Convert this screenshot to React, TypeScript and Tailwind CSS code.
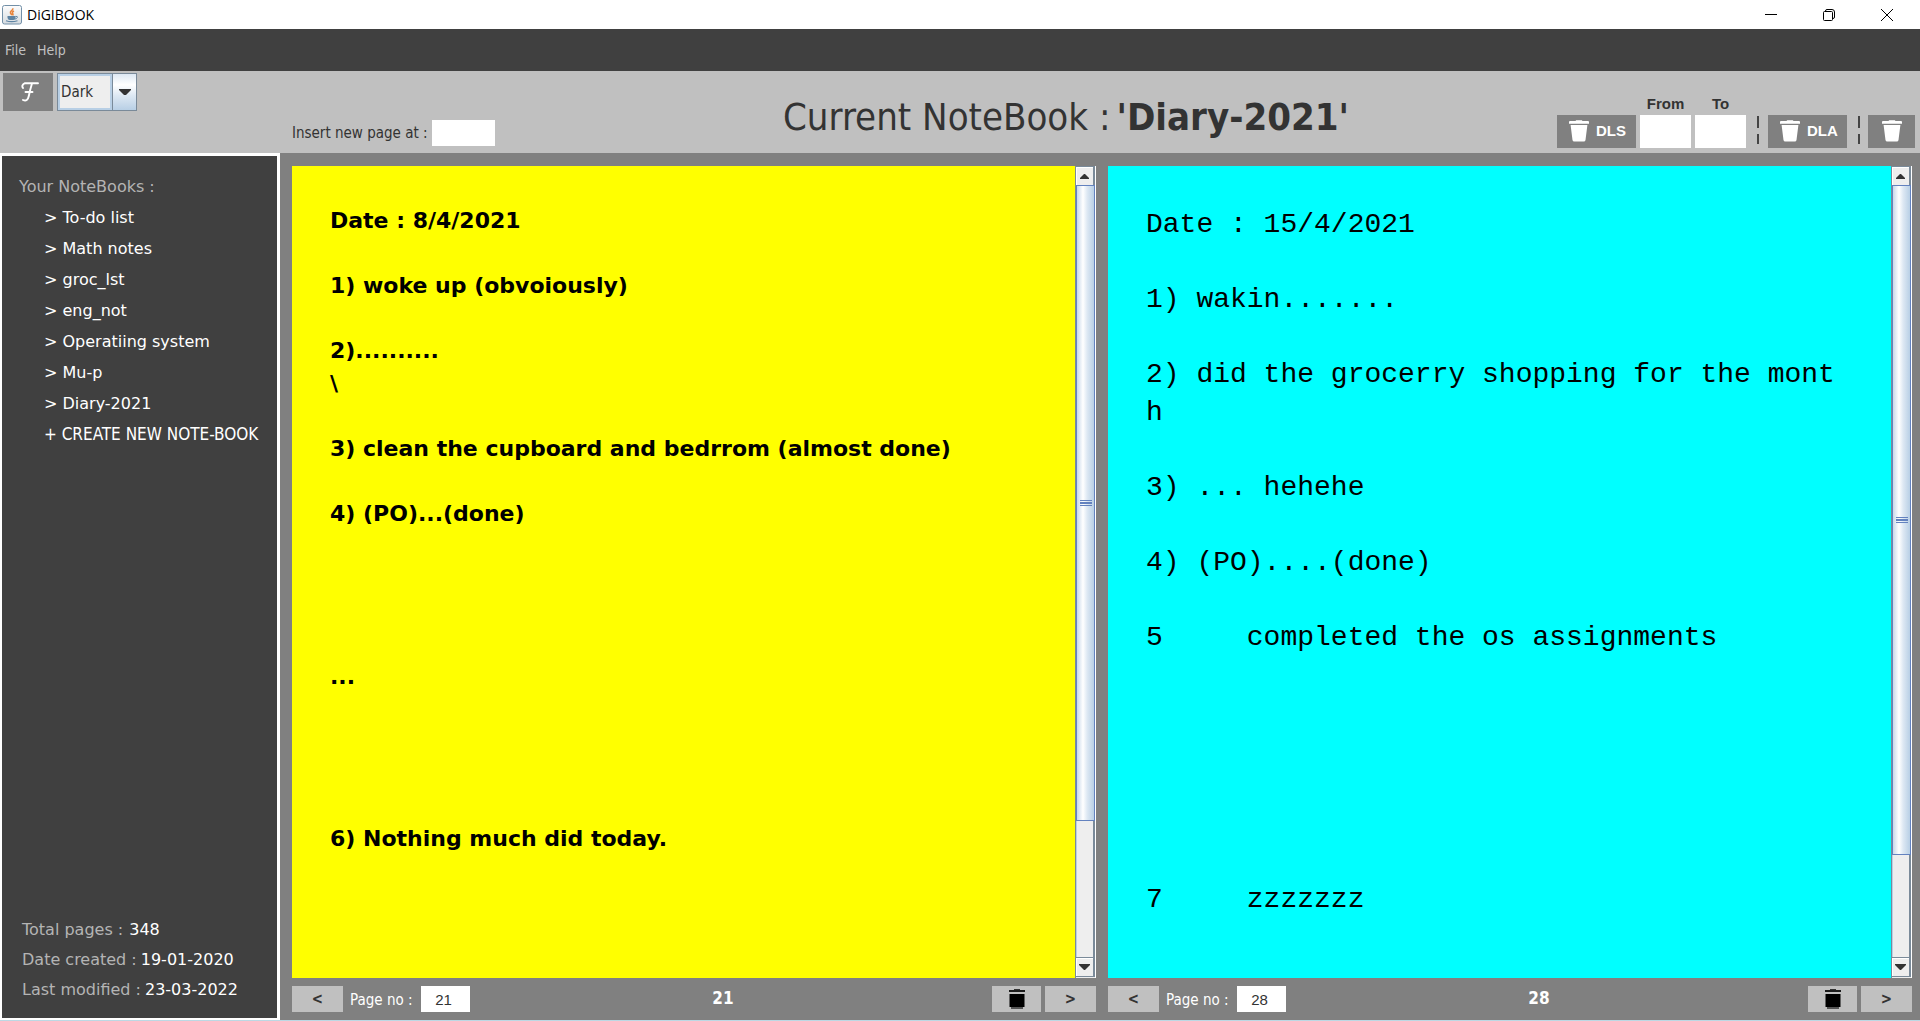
import { useState } from "react";

const notebooks = ["To-do list", "Math notes", "groc_lst", "eng_not", "Operatiing system", "Mu-p", "Diary-2021"];

const leftText = `Date : 8/4/2021

1) woke up (obvoiously)

2)..........
\\

3) clean the cupboard and bedrrom (almost done)

4) (PO)...(done)




...




6) Nothing much did today.`;

const rightText = `Date : 15/4/2021

1) wakin.......

2) did the grocerry shopping for the month

3) ... hehehe

4) (PO)....(done)

5     completed the os assignments






7     zzzzzzz`;

function Trash({ className }: { className: string }) {
  return (
    <svg viewBox="0 0 20 22" className={className} fill="currentColor" aria-hidden="true">
      <path d="M1 1h5.500L7.200.2h5.600l.7.8H19q1 0 1 1v1.700H0V2q0-1 1-1z" />
      <path d="M1.600 5h16.800l-1.900 15q-.2 1.600-1.800 1.600H5.300q-1.600 0-1.800-1.600z" />
    </svg>
  );
}

function SquareTrash() {
  return (
    <svg viewBox="0 0 16 20" className="h-5 w-4" aria-hidden="true">
      <path d="M5 0h6v1H5z" fill="#333" />
      <path d="M0 1h16v2H0z" fill="#1c1c1c" />
      <path d="M.5 5h15v13H.5z" fill="#000" />
      <path d="M2 18h12v2H2z" fill="#555" />
    </svg>
  );
}

function JavaIcon() {
  return (
    <svg viewBox="0 0 20 20" className="size-5" aria-hidden="true">
      <defs>
        <linearGradient id="jbg" x1="0" y1="0" x2="0" y2="1">
          <stop offset="0" stopColor="#fdfdfd" />
          <stop offset="1" stopColor="#d5dbe0" />
        </linearGradient>
      </defs>
      <rect x="0.5" y="0.5" width="19" height="18.5" rx="2" fill="url(#jbg)" stroke="#7390a8" />
      <path d="M10.800 3.200c.8 2-3 2.800-2.400 4.600.3 1 1.200 1.500 1.400 2.400M12 6c-1.800.8-2 1.700-1.200 2.800.5.700.2 1.200-.2 1.600" fill="none" stroke="#e8833a" strokeWidth="1.500" />
      <path d="M5.500 11h8v1.500q0 2-2 2.500h-4q-2-.5-2-2.500z" fill="#5f84a3" />
      <path d="M13.500 11.400q2.500-.3 1.800 1.200t-2.800 1.500" fill="none" stroke="#5f84a3" />
      <path d="M4 15.800q5.500 1.800 11.500 0" fill="none" stroke="#5f84a3" strokeWidth="1.200" />
    </svg>
  );
}

function Divider() {
  return (
    <div className="flex h-8 w-[2px] flex-col justify-between pb-1" aria-hidden="true">
      <span className="h-3 bg-[#444]" />
      <span className="h-[10px] bg-[#444]" />
    </div>
  );
}

function ScrollBar({ share }: { share: number }) {
  return (
    <div className="flex w-[21px] flex-col border-r border-l border-r-white border-l-[#7a8a99] bg-[#eeeeee]">
      <button type="button" aria-label="Scroll up" className="grid h-[19px] place-items-center border-t border-r-2 border-[#7a8a99] shadow-[inset_1px_1px_0_#fff]">
        <svg viewBox="0 0 9 5" className="h-[5px] w-[9px]" fill="#333"><path d="M4 0h1l4 4v1H0V4z" /></svg>
      </button>
      <div className="flex-1 border-r-2 border-[#7a8a99] shadow-[inset_1px_0_0_#b8cfe5]">
        <div
          className="-mr-[2px] flex flex-col items-center justify-center gap-px border border-[#6382bf] bg-[linear-gradient(90deg,#c8d8ea_0%,#ffffff_35%,#dde8f3_60%,#b8cfe5_100%)]"
          style={{ height: `${share}%` }}
        >
          <span className="h-px w-3 bg-[#6382bf]" />
          <span className="h-[2px] w-3 bg-[#6382bf]" />
          <span className="h-px w-3 bg-[#6382bf]" />
        </div>
      </div>
      <button type="button" aria-label="Scroll down" className="mb-px grid h-5 place-items-center border-t border-r-2 border-b border-[#7a8a99] shadow-[inset_1px_1px_0_#fff]">
        <svg viewBox="0 0 11 6" className="h-[6px] w-[11px]" fill="#333"><path d="M0 0h11v1L6 6H5L0 1z" /></svg>
      </button>
    </div>
  );
}

function Page({ text, page, share, style }: { text: string; page: number; share: number; style: string }) {
  const [value, setValue] = useState(text);
  const id = `page-no-${page}`;
  return (
    <section className="flex min-w-0 flex-col">
      <div className="flex min-h-0 flex-1">
        <textarea
          aria-label={`Page ${page}`}
          spellCheck={false}
          value={value}
          onChange={(e) => setValue(e.target.value)}
          className={`min-w-0 flex-1 resize-none overflow-hidden break-all whitespace-pre-wrap text-black outline-none ${style}`}
        />
        <ScrollBar share={share} />
      </div>
      <div className="flex h-[42px] items-start pt-2">
        <button type="button" className="h-[26px] w-[51px] bg-[#c0c0c0] pt-px text-[15px] font-bold text-[#333]">&lt;</button>
        <label htmlFor={id} className="w-[78px] pt-1 pl-[7px] text-[15px] leading-5 whitespace-pre text-white">Page no :</label>
        <input id={id} defaultValue={page} className="h-[26px] w-[49px] bg-white pr-1 text-center font-['Liberation_Sans'] text-[15px] text-[#333] outline-none" />
        <output className="flex-1 pr-4 text-center text-[17px] leading-6 font-bold text-white">{page}</output>
        <button type="button" aria-label="Delete page" className="mr-1 grid h-[26px] w-[49px] place-items-center bg-[#c0c0c0]"><SquareTrash /></button>
        <button type="button" className="h-[26px] w-[51px] bg-[#c0c0c0] pt-px text-[15px] font-bold text-[#333]">&gt;</button>
      </div>
    </section>
  );
}

export default function App() {
  return (
    <div className="flex h-screen flex-col overflow-hidden border-b border-[#bcd8e4] bg-[#808080] font-['DejaVu_Sans_Condensed','Noto_Sans',sans-serif] text-[#333]">
      <header className="flex h-[29px] items-center bg-white pl-[2px]">
        <JavaIcon />
        <h1 className="ml-[5px] flex-1 font-['Open_Sans'] text-[14px] text-black">DiGIBOOK</h1>
        <button type="button" aria-label="Minimize" className="grid h-full w-[58px] place-items-center">
          <svg viewBox="0 0 12 12" className="size-3" stroke="#000"><path d="M0 5.500h12" /></svg>
        </button>
        <button type="button" aria-label="Restore" className="grid h-full w-[58px] place-items-center">
          <svg viewBox="0 0 12 12" className="size-3" fill="none" stroke="#000"><rect x=".5" y="2.500" width="9" height="9" rx="1" /><path d="M2.500 2.500v-.5q0-1.500 1.500-1.500h5q2.500 0 2.500 2.500v5q0 1.500-1.500 1.500" /></svg>
        </button>
        <button type="button" aria-label="Close" className="mr-1 grid h-full w-[58px] place-items-center">
          <svg viewBox="0 0 12 12" className="size-3" stroke="#000"><path d="M0 0l12 12M12 0L0 12" /></svg>
        </button>
      </header>

      <nav className="flex h-[42px] items-center gap-[11px] bg-[#404040] pl-[5px] text-[14px] text-[#c0c0c0]">
        <button type="button">File</button>
        <button type="button">Help</button>
      </nav>

      <div className="flex h-[82px] bg-[#c0c0c0]">
        <div className="flex w-[292px] items-start gap-1 pt-[2px] pl-[3px]">
          <button type="button" aria-label="Font" className="grid h-[38px] w-[50px] place-items-center bg-[#808080]">
            <svg viewBox="0 0 18 20" className="ml-1 h-5 w-[18px]" fill="none" stroke="#fff" strokeWidth="1.900" strokeLinecap="round"><path d="M2 6Q0 3 4 1.200h13M11 1.500Q9 8 7.800 14T2 18M4.500 10h7" /></svg>
          </button>
          <div className="flex h-[38px] w-20 border border-[#7a8a99] bg-[#eeeeee]">
            <select aria-label="Theme" className="min-w-0 flex-1 appearance-none border-2 border-[#b8cfe5] bg-[#eeeeee] pl-px text-[15px] outline-none">
              <option>Dark</option>
              <option>Light</option>
            </select>
            <span className="grid w-6 place-items-center border-l border-[#7a8a99] bg-[linear-gradient(#dde8f3_0%,#ffffff_30%,#dde8f3_60%,#b8cfe5_100%)]">
              <svg viewBox="0 0 12 6" className="h-[6px] w-3" fill="#333"><path d="M0 0h12v1L7 6H5L0 1z" /></svg>
            </span>
          </div>
        </div>
        <div className="flex items-end gap-[5px] pb-[7px]">
          <label htmlFor="insert" className="w-[135px] text-[15px] leading-[26px] whitespace-nowrap">Insert new page at :</label>
          <input id="insert" className="h-[26px] w-[63px] bg-white px-1 outline-none" />
        </div>
        <h2 className="flex flex-1 justify-center gap-[6px] pt-4 pl-20 text-[38px] leading-[60px] whitespace-nowrap">
          <span>Current NoteBook :</span>
          <b>'Diary-2021'</b>
        </h2>
        <div className="flex items-end gap-1 pr-[5px] pb-[5px] font-['Liberation_Sans'] font-bold">
          <button type="button" className="flex h-[33px] w-[79px] items-center gap-[7px] bg-[#808080] pl-3 text-[15px] text-white">
            <Trash className="mb-px h-[22px] w-5" />DLS
          </button>
          <label className="flex w-[51px] flex-col text-center text-[15px] leading-[22px]">
            From<input className="h-[33px] w-full bg-white px-1 outline-none" />
          </label>
          <label className="flex w-[51px] flex-col text-center text-[15px] leading-[22px]">
            To<input className="h-[33px] w-full bg-white px-1 outline-none" />
          </label>
          <div className="w-[14px] pl-[7px]"><Divider /></div>
          <button type="button" className="flex h-[33px] w-[79px] items-center gap-[7px] bg-[#808080] pl-3 text-[15px] text-white">
            <Trash className="mb-px h-[22px] w-5" />DLA
          </button>
          <div className="w-[13px] pl-[7px]"><Divider /></div>
          <button type="button" aria-label="Delete notebook" className="grid h-[33px] w-[47px] place-items-center bg-[#808080] text-white">
            <Trash className="mb-px h-[22px] w-5" />
          </button>
        </div>
      </div>

      <div className="flex min-h-0 flex-1">
        <aside className="flex w-[280px] flex-col border-t-[3px] border-r-[3px] border-b-2 border-l-2 border-white bg-[#404040] pt-4 pb-[13px] font-['DejaVu_Sans']">
          <h3 className="pl-[17px] text-base leading-[30px] text-[#b4b4b4]">Your NoteBooks :</h3>
          <ul className="pl-[42px] text-base leading-[31px] text-white">
            {notebooks.map((n) => (
              <li key={n}><button type="button" className="whitespace-pre">&gt; {n}</button></li>
            ))}
            <li className="font-['DejaVu_Sans_Condensed'] text-[17px]"><button type="button" className="whitespace-nowrap">+ CREATE NEW NOTE-BOOK</button></li>
          </ul>
          <dl className="mt-auto pl-5 text-base leading-[30px] text-[#b4b4b4]">
            <div className="flex gap-[6px]"><dt>Total pages :</dt><dd className="text-white">348</dd></div>
            <div className="flex gap-1"><dt>Date created :</dt><dd className="text-white">19-01-2020</dd></div>
            <div className="flex gap-1"><dt>Last modified :</dt><dd className="text-white">23-03-2022</dd></div>
          </dl>
        </aside>

        <main className="grid flex-1 grid-cols-2 gap-3 pt-[13px] pr-2 pl-3">
          <Page text={leftText} page={21} share={82.4} style="bg-[#ffff00] pt-[39px] pl-[38px] pr-8 font-['DejaVu_Sans'] font-bold text-[22px] leading-[1.48]" />
          <Page text={rightText} page={28} share={86.8} style="bg-[#00ffff] pt-10 pl-[38px] pr-12 font-['Liberation_Mono'] text-[28px] leading-[1.34]" />
        </main>
      </div>
    </div>
  );
}
